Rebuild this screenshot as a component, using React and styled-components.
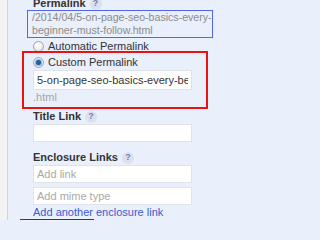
import React from 'react';
import styled, { createGlobalStyle } from 'styled-components';

const GlobalStyle = createGlobalStyle`
    html, body {
        margin: 0;
        padding: 0;
        background: #e9effb;
    }
    body {
        height: 220px;
        overflow: hidden;
        font-family: "Liberation Sans", Arial, sans-serif;
    }
`;

const Page = styled.div`
    display: flex;
    height: 220px;
    overflow: hidden;
`;

const Gutter = styled.div`
    flex: none;
    width: 7px;
    background: #f3f3f3;
    border-right: 1px solid #cfd3da;
`;

const Panel = styled.div`
    flex: 1;
    background: #e9effb;
    padding-left: 14px;
    overflow: hidden;
`;

const Content = styled.div`
    margin-top: -3px;
    display: flex;
    flex-direction: column;
    align-items: flex-start;
`;

const Label = styled.div`
    display: flex;
    align-items: center;
    gap: 4px;
    margin: ${p => p.$top || 0}px 0 0 11px;
    font-size: 11px;
    font-weight: bold;
    line-height: 13px;
    color: #333;
`;

const Help = styled.span`
    display: inline-flex;
    align-items: center;
    justify-content: center;
    width: 12px;
    height: 12px;
    border-radius: 50%;
    background: #dce2ed;
    color: #6d80b3;
    font-size: 9px;
    font-weight: bold;
`;

const UrlBox = styled.div`
    box-sizing: border-box;
    width: 186px;
    margin: 0 0 0 5px;
    padding: 0 4px;
    border: 1px solid #5566ee;
    font-size: 10.6px;
    line-height: 13px;
    color: #8c8c8c;
    white-space: nowrap;
    overflow: hidden;
`;

const RadioRow = styled.label`
    display: flex;
    align-items: center;
    gap: 4px;
    margin: ${p => p.$top || 0}px 0 0 ${p => p.$left || 0}px;
    font-size: 11px;
    line-height: 12px;
    color: #333;
`;

const Radio = styled.span`
    box-sizing: border-box;
    width: 11px;
    height: 11px;
    border-radius: 50%;
    border: 1px solid #a3a3a3;
    background: radial-gradient(circle at 40% 35%, #ffffff 0%, #dedede 100%);
    display: flex;
    align-items: center;
    justify-content: center;

    &::after {
        content: '';
        width: 5px;
        height: 5px;
        border-radius: 50%;
        background: ${p => p.$checked ? '#1f5fa8' : 'transparent'};
        box-shadow: ${p => p.$checked ? '0 0 1px 1px #7ab0de' : 'none'};
    }
`;

const RedBox = styled.div`
    box-sizing: border-box;
    width: 186px;
    margin-top: -1px;
    padding: 3px 0 3px 9px;
    border: 2px solid #ee1111;
`;

const Field = styled.input`
    box-sizing: border-box;
    display: block;
    width: 159px;
    height: ${p => p.$h || 18}px;
    margin: ${p => p.$top || 0}px 0 0 ${p => p.$left || 0}px;
    padding: 0 3px;
    border: 1px solid #dfe3e9;
    background: #fff;
    font-family: "Liberation Sans", Arial, sans-serif;
    font-size: 11px;
    color: #333;
    outline: none;

    &::placeholder {
        color: #a9a9a9;
    }
`;

const Suffix = styled.div`
    margin-top: 1px;
    font-size: 11px;
    line-height: 13px;
    color: #a6a6a6;
`;

const AddLink = styled.a`
    margin: 1px 0 0 11px;
    font-size: 11px;
    line-height: 13px;
    color: #3b5bd0;
    text-decoration: none;
    cursor: pointer;
`;

const Marker = styled.div`
    width: 74px;
    margin: 0 0 0 -2px;
    border-top: 2px solid #1a2fd6;
`;

export default function App() {
    return (
        <Page>
            <GlobalStyle />
            <Gutter />
            <Panel>
                <Content>
                    <Label>Permalink <Help>?</Help></Label>
                    <UrlBox>
                        /2014/04/5-on-page-seo-basics-every-<br />
                        beginner-must-follow.html
                    </UrlBox>
                    <RadioRow $top={2} $left={11}>
                        <Radio />
                        Automatic Permalink
                    </RadioRow>
                    <RedBox>
                        <RadioRow>
                            <Radio $checked />
                            Custom Permalink
                        </RadioRow>
                        <Field $h={20} $top={2} readOnly defaultValue="5-on-page-seo-basics-every-beginner-must-follow" />
                        <Suffix>.html</Suffix>
                    </RedBox>
                    <Label $top={1}>Title Link <Help>?</Help></Label>
                    <Field $left={11} $top={1} readOnly />
                    <Label $top={9}>Enclosure Links <Help>?</Help></Label>
                    <Field $left={11} $top={1} readOnly placeholder="Add link" />
                    <Field $left={11} $top={4} readOnly placeholder="Add mime type" />
                    <AddLink>Add another enclosure link</AddLink>
                    <Marker />
                </Content>
            </Panel>
        </Page>
    );
}
